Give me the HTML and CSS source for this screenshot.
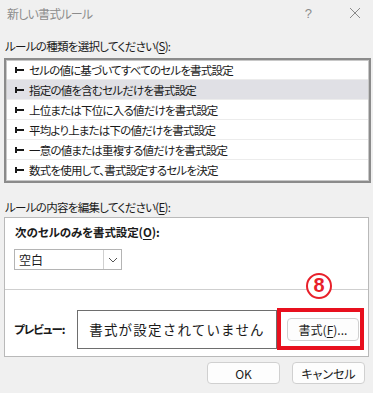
FILE: index.html
```html
<!DOCTYPE html>
<html lang="ja">
<head>
<meta charset="utf-8">
<link rel="stylesheet" href="styles.css">
</head>
<body>
<div class="dialog">
  <div class="titlebar">
    <span class="title">新しい書式ルール</span>
    <span class="help">?</span>
    <svg class="close" width="12" height="12" viewBox="0 0 12 12"><path d="M1 1L11 11M11 1L1 11" stroke="#8a8a8a" stroke-width="1"/></svg>
  </div>
  <div class="label first">ルールの種類を選択してください(<u>S</u>):</div>
  <div class="list">
    <div class="row"><svg class="arrow" width="9" height="6" viewBox="0 0 9 6"><rect x="0" y="0" width="2" height="6" fill="#1a1a1a"/><rect x="0" y="2" width="9" height="2" fill="#1a1a1a"/></svg><span>セルの値に基づいてすべてのセルを書式設定</span></div>
    <div class="row selected"><svg class="arrow" width="9" height="6" viewBox="0 0 9 6"><rect x="0" y="0" width="2" height="6" fill="#1a1a1a"/><rect x="0" y="2" width="9" height="2" fill="#1a1a1a"/></svg><span>指定の値を含むセルだけを書式設定</span></div>
    <div class="row"><svg class="arrow" width="9" height="6" viewBox="0 0 9 6"><rect x="0" y="0" width="2" height="6" fill="#1a1a1a"/><rect x="0" y="2" width="9" height="2" fill="#1a1a1a"/></svg><span>上位または下位に入る値だけを書式設定</span></div>
    <div class="row"><svg class="arrow" width="9" height="6" viewBox="0 0 9 6"><rect x="0" y="0" width="2" height="6" fill="#1a1a1a"/><rect x="0" y="2" width="9" height="2" fill="#1a1a1a"/></svg><span>平均より上または下の値だけを書式設定</span></div>
    <div class="row"><svg class="arrow" width="9" height="6" viewBox="0 0 9 6"><rect x="0" y="0" width="2" height="6" fill="#1a1a1a"/><rect x="0" y="2" width="9" height="2" fill="#1a1a1a"/></svg><span>一意の値または重複する値だけを書式設定</span></div>
    <div class="row last"><svg class="arrow" width="9" height="6" viewBox="0 0 9 6"><rect x="0" y="0" width="2" height="6" fill="#1a1a1a"/><rect x="0" y="2" width="9" height="2" fill="#1a1a1a"/></svg><span>数式を使用して、書式設定するセルを決定</span></div>
  </div>
  <div class="label second">ルールの内容を編集してください(<u>E</u>):</div>
  <div class="panel">
    <div class="section top">
      <div class="bold-label cond">次のセルのみを書式設定(<u>O</u>):</div>
      <div class="dropdown">
        <span class="value">空白</span>
        <span class="dd-btn"><svg width="10" height="6" viewBox="0 0 10 6"><path d="M1 1L5 5L9 1" fill="none" stroke="#555" stroke-width="1"/></svg></span>
      </div>
    </div>
    <div class="section bottom">
      <span class="badge">8</span>
      <div class="preview-row">
        <span class="bold-label prev">プレビュー:</span>
        <div class="preview-box">書式が設定されていません</div>
        <div class="highlight">
          <button class="btn format">書式(<u>F</u>)...</button>
        </div>
      </div>
    </div>
  </div>
  <div class="buttons">
    <button class="btn ok">OK</button>
    <button class="btn cancel">キャンセル</button>
  </div>
</div>
</body>
</html>
```
FILE: styles.css
```css
* { box-sizing: border-box; }
html, body { margin: 0; padding: 0; }
body {
  width: 373px;
  height: 393px;
  overflow: hidden;
  background: #f0f0f0;
  font-family: "Noto Sans CJK JP", "Noto Sans", sans-serif;
  font-size: 12px;
  color: #1a1a1a;
  font-feature-settings: "palt";
}
u { text-decoration: underline; text-underline-offset: 2px; }
.dialog { width: 373px; height: 393px; }
.titlebar {
  height: 26px;
  display: flex;
  align-items: center;
  padding-left: 7px;
}
.title { color: #8c8c8c; font-size: 12px; letter-spacing: -0.8px; flex: 1; }
.help { color: #8c8c8c; font-family: "Liberation Sans", sans-serif; font-size: 13px; margin-right: 37px; }
.close { margin-right: 12px; }
.label {
  line-height: 16px;
  height: 16px;
  padding-left: 5px;
  font-size: 11.5px;
  letter-spacing: -0.7px;
}
.label.first { margin-top: 12px; margin-bottom: 4px; }
.list {
  margin-left: 4px;
  width: 367px;
  height: 125px;
  border: 2px solid #8b8b8b;
  background: #fff;
  box-shadow: inset 0 0 0 1px #c8c8c8;
  padding: 0 1px;
}
.row {
  height: 20px;
  display: flex;
  align-items: center;
  border-bottom: 1px solid #ececec;
  font-size: 11.5px;
  letter-spacing: -0.8px;
}
.row.last { border-bottom: none; }
.row.selected { background: #e0e0e5; }
.arrow { margin-left: 8px; margin-right: 5px; flex: none; }
.label.second { margin-top: 16px; margin-bottom: 2px; }
.panel {
  margin-left: 4px;
  width: 365px;
  height: 140px;
  background: #fff;
  border: 1px solid #b9b9b9;
}
.section.top {
  height: 72px;
  padding: 6px 0 0 10px;
  border-bottom: 1px solid #cfcfcf;
}
.bold-label { font-weight: bold; line-height: 16px; font-size: 11.5px; }
.cond { letter-spacing: -0.1px; margin-bottom: 9px; }
.prev { letter-spacing: -1px; }
.dropdown {
  width: 108px;
  height: 21px;
  margin-left: -1px;
  border: 1px solid #b4b4b4;
  display: flex;
  align-items: center;
}
.value { flex: 1; padding-left: 4px; }
.dd-btn {
  width: 18px;
  height: 19px;
  border-left: 1px solid #d0d0d0;
  display: flex;
  align-items: center;
  justify-content: center;
}
.section.bottom { position: relative; height: 66px; padding-top: 18px; }
.badge {
  position: absolute;
  left: 301px;
  top: -17px;
  width: 26px;
  height: 26px;
  border: 2.5px solid #e8202a;
  border-radius: 50%;
  color: #e8202a;
  font-family: "Liberation Sans", sans-serif;
  font-weight: bold;
  font-size: 20px;
  line-height: 21px;
  text-align: center;
  background: #fff;
}
.preview-row {
  display: flex;
  align-items: center;
  padding-left: 9px;
}
.preview-row .bold-label { width: 63px; }
.preview-box {
  width: 200px;
  height: 39px;
  border: 1px solid #6e6e6e;
  display: flex;
  align-items: center;
  justify-content: center;
  font-size: 13.5px;
  letter-spacing: 1.2px;
  font-feature-settings: normal;
}
.highlight {
  width: 87px;
  height: 42px;
  border: 4px solid #e8101e;
  display: flex;
  align-items: center;
  padding-left: 6px;
}
.btn {
  font-family: "Noto Sans CJK JP", "Noto Sans", sans-serif;
  font-feature-settings: "palt";
  font-size: 12px;
  color: #1a1a1a;
  background: #fdfdfd;
  border: 1px solid #d0d0d0;
  border-radius: 4px;
  padding: 0;
  height: 23px;
}
.format { width: 72px; }
.buttons {
  display: flex;
  justify-content: flex-end;
  margin-top: 5px;
  padding-right: 8px;
  gap: 12px;
}
.ok, .cancel { width: 73px; height: 22px; }
```
